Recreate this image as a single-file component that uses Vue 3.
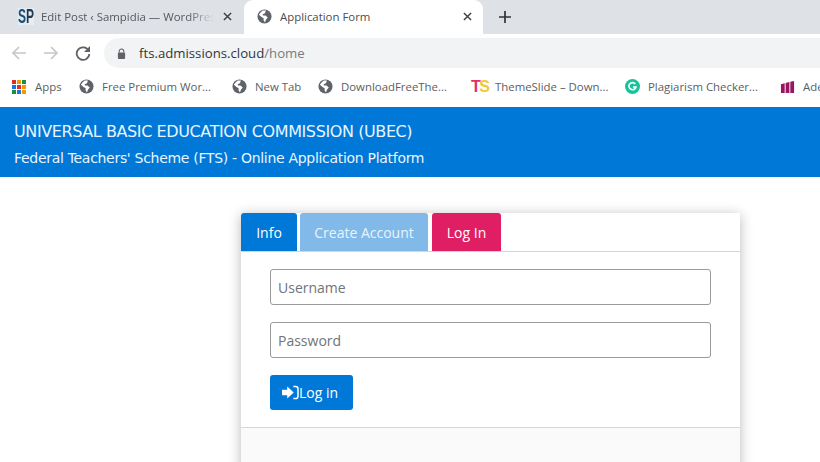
<script setup>
const bookmarks = [
  { label: 'Free Premium Wor...', icon: 'globe', w: 153 },
  { label: 'New Tab', icon: 'globe', w: 86 },
  { label: 'DownloadFreeThe...', icon: 'globe', w: 152 },
  { label: 'ThemeSlide – Down...', icon: 'ts', w: 155 },
  { label: 'Plagiarism Checker...', icon: 'g', w: 155 },
  { label: 'Ade', icon: 'bars', w: 60 }
]
const appColors = ['#d93025','#f29900','#1e8e3e','#1a73e8','#d93025','#f29900','#1e8e3e','#1a73e8','#f29900']
</script>

<template>
  <div class="page">
    <div class="tabstrip">
      <div class="tab inactive">
        <span class="sp"><span class="spin"><span class="s">S</span><span class="p">P</span></span></span>
        <span class="tabtitle fade">Edit Post ‹ Sampidia — WordPres</span>
        <svg class="close" viewBox="0 0 10 10"><path d="M1 1l8 8M9 1l-8 8" /></svg>
      </div>
      <div class="tab active">
        <svg class="globe" viewBox="0 0 16 16"><circle cx="8" cy="8" r="7.500" fill="#5f6368"/><path d="M6 1.500 3.500 4 2 6l3.500 3 1.500.500V12l1.500 2.500 1-3 2-2.500-2.500-2H6.500L6 5.500l2.500-1 1-3z" fill="#fff"/></svg>
        <span class="tabtitle">Application Form</span>
        <svg class="close" viewBox="0 0 10 10"><path d="M1 1l8 8M9 1l-8 8" /></svg>
      </div>
      <svg class="plus" viewBox="0 0 12 12"><path d="M6 0v12M0 6h12" /></svg>
    </div>

    <div class="toolbar">
      <svg class="nav" viewBox="0 0 16 16"><path d="M15 8H2M8 2 2 8l6 6" /></svg>
      <svg class="nav" viewBox="0 0 16 16"><path d="M1 8h13M8 2l6 6-6 6" /></svg>
      <svg class="reload" viewBox="0 0 16 16"><path d="M13.500 5.500A6.300 6.300 0 1 0 14.300 9" fill="none" stroke="#5f6368" stroke-width="1.800"/><path d="M15 1v6H9z" fill="#5f6368"/></svg>
      <div class="omnibox">
        <svg class="lock" viewBox="0 0 10 12"><path d="M2.500 5V3.500a2.500 2.500 0 0 1 5 0V5" fill="none" stroke="#5f6368" stroke-width="1.200"/><rect x="1" y="5" width="8" height="7" rx="1" fill="#5f6368"/></svg>
        <span class="url">fts.admissions.cloud<span class="path">/home</span></span>
      </div>
    </div>

    <div class="bookmarks">
      <div class="bm apps">
        <span class="grid"><i v-for="(c, i) in appColors" :key="i" :style="{ background: c }"></i></span>
        <span>Apps</span>
      </div>
      <div v-for="b in bookmarks" :key="b.label" class="bm" :style="{ width: b.w + 'px' }">
        <svg v-if="b.icon === 'globe'" class="globe" viewBox="0 0 16 16"><circle cx="8" cy="8" r="7.500" fill="#5f6368"/><path d="M6 1.500 3.500 4 2 6l3.500 3 1.500.500V12l1.500 2.500 1-3 2-2.500-2.500-2H6.500L6 5.500l2.500-1 1-3z" fill="#fff"/></svg>
        <span v-else-if="b.icon === 'ts'" class="ts"><span class="t">T</span><span class="s2">S</span></span>
        <svg v-else-if="b.icon === 'g'" class="globe" viewBox="0 0 16 16"><circle cx="8" cy="8" r="8" fill="#15c39a"/><path d="M11 5.300A3.800 3.800 0 1 0 11.700 8.500H8.500" fill="none" stroke="#fff" stroke-width="1.800"/></svg>
        <svg v-else class="globe" viewBox="0 0 16 16"><path d="M1 5.500 5 4.500V15H1zM6 4.200l4-1V15H6zM11 3l4-1v13h-4z" fill="#99155f"/></svg>
        <span class="bmlabel">{{ b.label }}</span>
      </div>
    </div>

    <header class="banner">
      <div class="b1">UNIVERSAL BASIC EDUCATION COMMISSION (UBEC)</div>
      <div class="b2">Federal Teachers' Scheme (FTS) - Online Application Platform</div>
    </header>

    <section class="card">
      <nav class="formtabs">
        <a class="ft info">Info</a>
        <a class="ft create">Create Account</a>
        <a class="ft login">Log In</a>
      </nav>
      <form class="body" @submit.prevent>
        <input class="field" placeholder="Username" />
        <input class="field" placeholder="Password" />
        <button class="btn">
          <svg viewBox="0 0 18 16"><path d="M0 5h5.500V1.500L12.500 8l-7 6.500V11H0z" fill="#fff"/><path d="M12 1.500h2.500a2.500 2.500 0 0 1 2.500 2.500v8a2.500 2.500 0 0 1-2.500 2.500H12" fill="none" stroke="#fff" stroke-width="1.600"/></svg>
          <span>Log in</span>
        </button>
      </form>
      <div class="foot"></div>
    </section>
  </div>
</template>

<style>
html, body { margin: 0; background: #fff; overflow: hidden; }
</style>

<style scoped>
.page { width: 820px; height: 462px; overflow: hidden; font-family: "Open Sans", sans-serif; background: #fff; }
.tabstrip { height: 34px; background: #dee1e6; display: flex; align-items: stretch; }
.tab { display: flex; align-items: center; box-sizing: border-box; padding-bottom: 2px !important; }
.tab.inactive { width: 244px; padding: 0 12px 0 18px; }
.tab.active { width: 239px; background: #fff; border-radius: 9px 9px 0 0; padding: 0 11px 0 13px; }
.sp { width: 16px; height: 17px; margin-right: 7px; flex: none; background: #e6edf2; overflow: visible; }
.spin { display: block; font: 700 20px/17px "Liberation Sans", sans-serif; transform: scaleX(.6); transform-origin: left center; white-space: nowrap; }
.sp .s { color: #1a4f7a; }
.sp .p { color: #23384d; }
.tabtitle { flex: 1; font-size: 11.400px; color: #444a50; white-space: nowrap; overflow: hidden; }
.tab.active .tabtitle { margin-left: 8px; color: #4a4e52; }
.tab.inactive .tabtitle { color: #54585e; }
.fade { -webkit-mask-image: linear-gradient(90deg, #000 85%, transparent); mask-image: linear-gradient(90deg, #000 85%, transparent); }
.close { width: 9px; height: 9px; margin-left: 9px; flex: none; fill: none; stroke: #3c4043; stroke-width: 1.600; }
.globe { width: 15px; height: 15px; flex: none; }
.plus { width: 12px; height: 12px; margin: 11px 0 0 16px; fill: none; stroke: #303236; stroke-width: 1.700; }
.toolbar { height: 34px; background: #fff; display: flex; align-items: center; padding-left: 11px; padding-top: 4px; box-sizing: border-box; }
.nav { width: 16px; height: 16px; fill: none; stroke: #c4c7cb; stroke-width: 1.700; margin-right: 16px; }
.reload { width: 16px; height: 16px; }
.omnibox { height: 30px; flex: 1; margin-left: 13px; background: #f1f3f4; border-radius: 15px 0 0 15px; display: flex; align-items: center; padding-left: 13px; }
.lock { width: 9px; height: 11px; }
.url { margin-left: 13px; font-size: 13.200px; color: #33363a; }
.url .path { color: #777b80; }
.bookmarks { height: 33px; box-sizing: border-box; padding: 4px 0 0 12px; display: flex; align-items: center; background: #fff; font-size: 11.400px; color: #5a5e63; }
.bm { display: flex; align-items: center; flex: none; white-space: nowrap; }
.bmlabel { margin-left: 8px; }
.apps { width: 67px; }
.grid { display: grid; grid-template-columns: repeat(3, 4px); gap: 1px; margin-right: 9px; }
.grid i { height: 4px; display: block; }
.ts { width: 16px; margin-left: 1px; margin-right: 0; font: 700 16px/1 "Liberation Sans", sans-serif; letter-spacing: -1.500px; }
.ts .t { color: #e2315f; }
.ts .s2 { color: #f0c934; }
.banner { margin-top: 6px; height: 70px; background: #0078d7; box-sizing: border-box; padding: 13px 0 0 14px; font-family: "DejaVu Sans", sans-serif; }
.b1 { font-size: 16px; line-height: 24px; letter-spacing: -.4px; color: #e8f4ff; white-space: nowrap; }
.b2 { font-size: 14px; line-height: 24px; margin-top: 2px; letter-spacing: -.3px; color: #e8f4ff; white-space: nowrap; }
.card { width: 499px; height: 260px; margin: 36px 0 0 241px; box-shadow: 0 2px 12px rgba(0,0,0,.28); background: #fff; }
.formtabs { height: 38px; display: flex; gap: 3px; border-bottom: 1px solid #d5d5d5; }
.ft { height: 38px; color: #fff; font-size: 14px; display: flex; align-items: center; justify-content: center; border-radius: 3px 3px 0 0; box-sizing: border-box; }
.info { width: 56px; background: #0078d7; }
.create { width: 128px; background: #81b9e9; color: #e8f4fc; }
.login { width: 69px; margin-left: 1px; background: #e01e63; }
.body { display: flex; flex-direction: column; align-items: flex-start; padding: 17px 29px 0 29px; height: 158px; border-bottom: 1px solid #d8d8d8; }
.field { width: 441px; height: 36px; box-sizing: border-box; border: 1px solid #9a9a9a; border-radius: 3px; padding: 0 7px; font: 14px "Open Sans", sans-serif; margin-bottom: 17px; outline: none; background: #fff; }
.field::placeholder { color: #6f7478; opacity: 1; }
.btn { width: 83px; height: 35px; background: #0078d7; border: 0; border-radius: 3px; color: #fff; font: 14px "Open Sans", sans-serif; display: flex; align-items: center; justify-content: center; gap: 0; padding: 0 3px 0 0; }
.btn svg { width: 17px; height: 15px; }
.foot { height: 70px; background: #fbfafb; }
</style>
